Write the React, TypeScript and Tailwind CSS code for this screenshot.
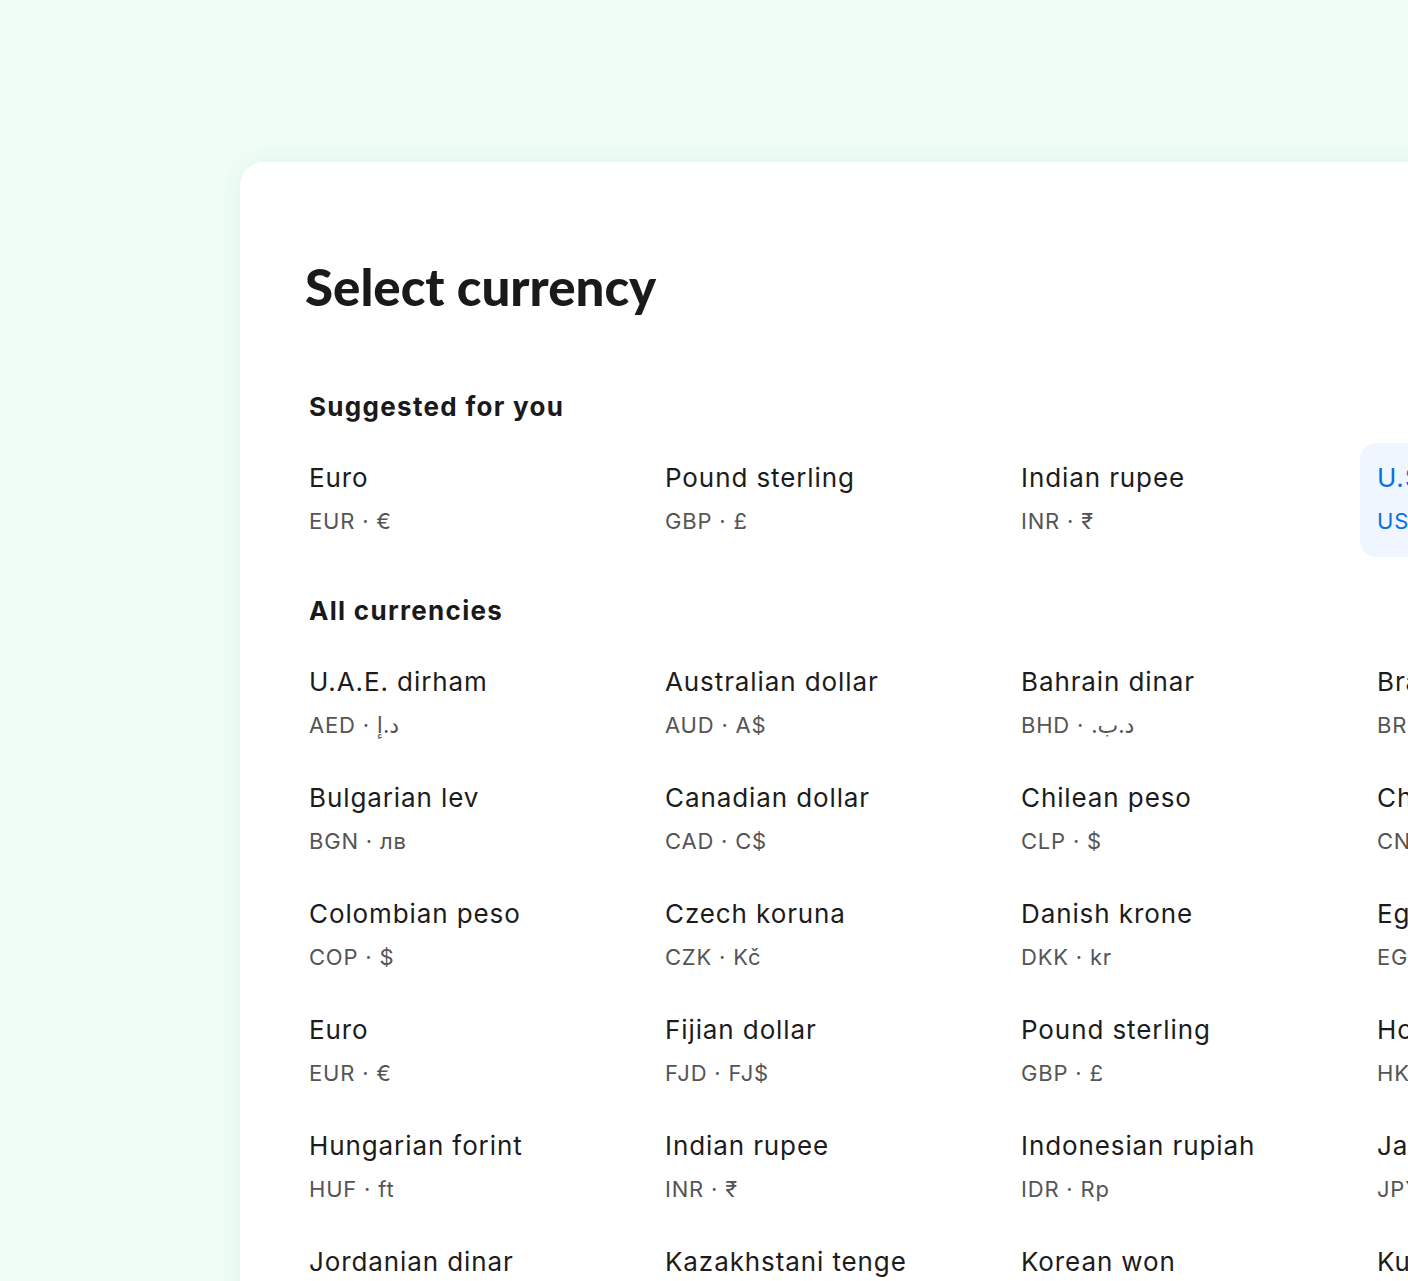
type Currency = { name: string; code: string; symbol: string };

const suggested: Currency[] = [
  { name: "Euro", code: "EUR", symbol: "€" },
  { name: "Pound sterling", code: "GBP", symbol: "£" },
  { name: "Indian rupee", code: "INR", symbol: "₹" },
  { name: "U.S. dollar", code: "USD", symbol: "$" },
];

const all: Currency[] = [
  { name: "U.A.E. dirham", code: "AED", symbol: "د.إ" },
  { name: "Australian dollar", code: "AUD", symbol: "A$" },
  { name: "Bahrain dinar", code: "BHD", symbol: "د.ب." },
  { name: "Brazilian real", code: "BRL", symbol: "R$" },
  { name: "Bulgarian lev", code: "BGN", symbol: "лв" },
  { name: "Canadian dollar", code: "CAD", symbol: "C$" },
  { name: "Chilean peso", code: "CLP", symbol: "$" },
  { name: "Chinese yuan", code: "CNY", symbol: "¥" },
  { name: "Colombian peso", code: "COP", symbol: "$" },
  { name: "Czech koruna", code: "CZK", symbol: "Kč" },
  { name: "Danish krone", code: "DKK", symbol: "kr" },
  { name: "Egyptian pound", code: "EGP", symbol: "E£" },
  { name: "Euro", code: "EUR", symbol: "€" },
  { name: "Fijian dollar", code: "FJD", symbol: "FJ$" },
  { name: "Pound sterling", code: "GBP", symbol: "£" },
  { name: "Hong Kong dollar", code: "HKD", symbol: "HK$" },
  { name: "Hungarian forint", code: "HUF", symbol: "ft" },
  { name: "Indian rupee", code: "INR", symbol: "₹" },
  { name: "Indonesian rupiah", code: "IDR", symbol: "Rp" },
  { name: "Japanese yen", code: "JPY", symbol: "¥" },
  { name: "Jordanian dinar", code: "JOD", symbol: "د.ا" },
  { name: "Kazakhstani tenge", code: "KZT", symbol: "₸" },
  { name: "Korean won", code: "KRW", symbol: "₩" },
  { name: "Kuwaiti dinar", code: "KWD", symbol: "د.ك" },
];

const CurrencyItem = ({ item, active }: { item: Currency; active?: boolean }) => (
  <button
    className={
      "flex h-[114px] flex-col items-start rounded-[16px] px-[17px] pt-[17px] text-left " +
      (active ? "bg-[#eff6ff]" : "bg-transparent")
    }
  >
    <span
      className={
        "whitespace-nowrap text-[26px] leading-[36px] tracking-[0.9px] " +
        (active ? "text-[#0b6fe0]" : "text-[#1c1c1c]")
      }
    >
      {item.name}
    </span>
    <span
      className={
        "mt-[9px] whitespace-nowrap text-[22px] leading-[32px] tracking-[0.8px] " +
        (active ? "text-[#0b6fe0]" : "text-[#555555]")
      }
    >
      {item.code} · <bdi>{item.symbol}</bdi>
    </span>
  </button>
);

const App = () => {
  return (
    <div className="h-screen w-full overflow-hidden bg-[#effdf4] pl-[240px] pt-[162px] font-['Inter','DejaVu_Sans',sans-serif]">
      <div className="min-h-[1200px] w-[1400px] rounded-tl-[24px] bg-white pl-[52px] pt-[94px] shadow-[0_0_20px_rgba(34,160,100,0.08)]">
        <h1 className="pl-[13px] font-['Lato',sans-serif] text-[51px] font-black leading-[62px] text-[#1a1a1a]">
          Select currency
        </h1>

        <h2 className="mt-[73px] px-[17px] text-[26px] font-bold leading-[32px] tracking-[1.3px] text-[#1a1a1a]">
          Suggested for you
        </h2>
        <div className="mt-[20px] grid grid-cols-[repeat(4,348px)] gap-x-[8px]">
          {suggested.map((c, i) => (
            <CurrencyItem key={c.code} item={c} active={i === 3} />
          ))}
        </div>

        <h2 className="mt-[38px] px-[17px] text-[26px] font-bold leading-[32px] tracking-[1.3px] text-[#1a1a1a]">
          All currencies
        </h2>
        <div className="mt-[20px] grid grid-cols-[repeat(4,348px)] gap-x-[8px] gap-y-[2px]">
          {all.map((c) => (
            <CurrencyItem key={c.code + c.name} item={c} />
          ))}
        </div>
      </div>
    </div>
  );
};

export default App;
